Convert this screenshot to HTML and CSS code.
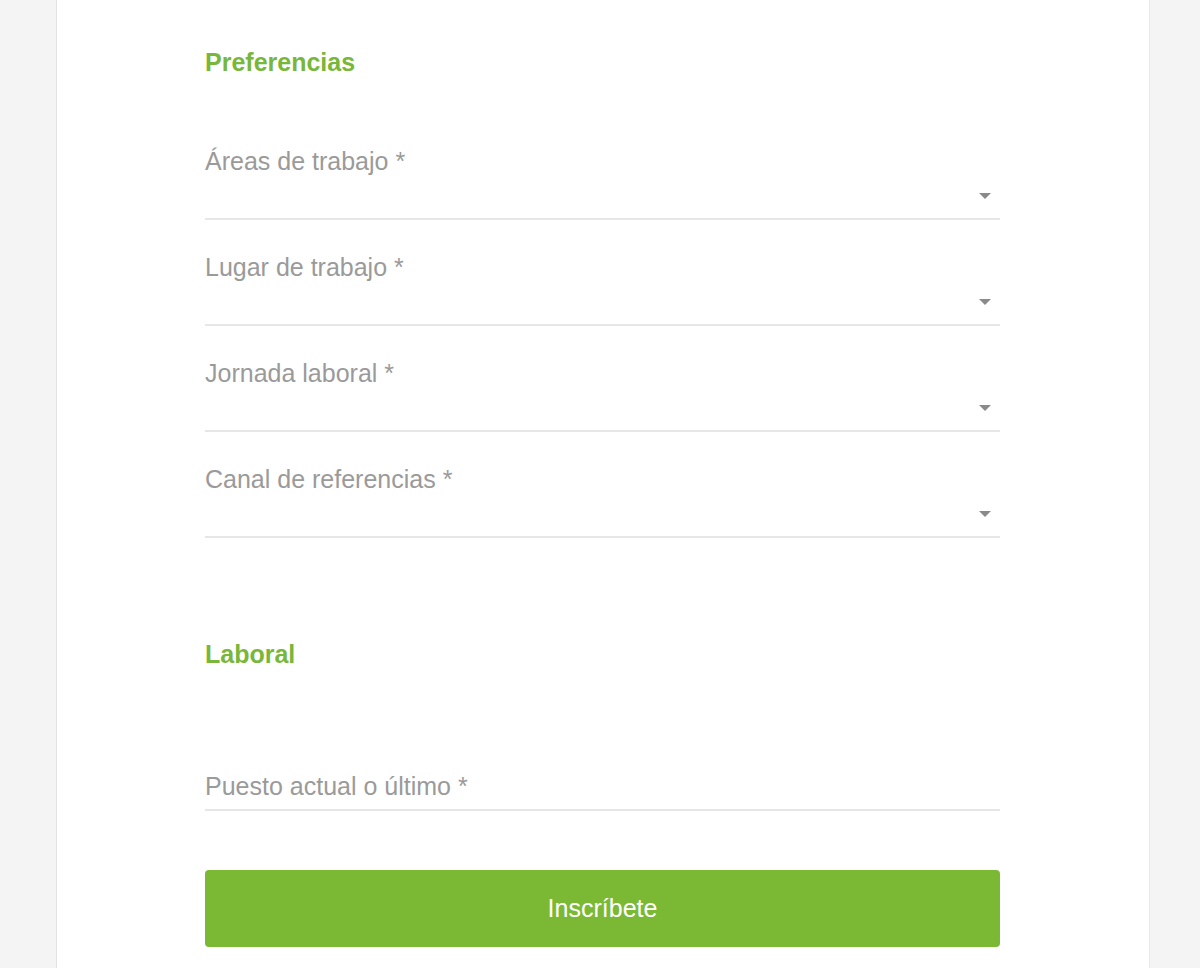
FILE: index.html
```html
<!DOCTYPE html>
<html lang="es">
<head>
<meta charset="utf-8">
<title>Inscríbete</title>
<link rel="stylesheet" href="styles.css">
</head>
<body>
<main class="card">
  <form class="form">
    <h2 class="section-title">Preferencias</h2>
    <div class="field select-field">
      <span class="label">Áreas de trabajo *</span>
      <div class="select-row"><span class="caret"></span></div>
    </div>
    <div class="field select-field">
      <span class="label">Lugar de trabajo *</span>
      <div class="select-row"><span class="caret"></span></div>
    </div>
    <div class="field select-field">
      <span class="label">Jornada laboral *</span>
      <div class="select-row"><span class="caret"></span></div>
    </div>
    <div class="field select-field">
      <span class="label">Canal de referencias *</span>
      <div class="select-row"><span class="caret"></span></div>
    </div>

    <h2 class="section-title section-second">Laboral</h2>
    <div class="field text-field">
      <span class="label">Puesto actual o último *</span>
    </div>

    <button type="button" class="submit">Inscríbete</button>
  </form>
</main>
</body>
</html>
```

FILE: styles.css
```css
html, body {
  margin: 0;
  padding: 0;
}
body {
  background: #f4f4f4;
  font-family: "Liberation Sans", Arial, sans-serif;
  height: 968px;
  overflow: hidden;
}
.card {
  margin-left: 56px;
  width: 1094px;
  min-height: 968px;
  background: #ffffff;
  border-left: 1px solid #e2e2e2;
  border-right: 1px solid #e9e9e9;
  box-sizing: border-box;
  padding: 47px 0 0 148px;
}
.form {
  width: 795px;
  display: flex;
  flex-direction: column;
}
.section-title {
  margin: 0;
  font-size: 25px;
  line-height: 30px;
  font-weight: bold;
  color: #78b73a;
}
.section-second {
  margin-top: 101px;
}
.field {
  display: flex;
  flex-direction: column;
  border-bottom: 2px solid #e6e6e6;
}
.select-field {
  margin-top: 32px;
}
.select-field:first-of-type {
  margin-top: 69px;
}
.label {
  font-size: 25px;
  line-height: 30px;
  color: #9a9a9a;
}
.select-row {
  height: 42px;
  display: flex;
  align-items: center;
  justify-content: flex-end;
  padding-right: 9px;
}
.caret {
  width: 0;
  height: 0;
  border-left: 6px solid transparent;
  border-right: 6px solid transparent;
  border-top: 6px solid #8a8a8a;
  margin-bottom: 3px;
}
.text-field {
  margin-top: 102px;
  padding-bottom: 8px;
}
.submit {
  margin-top: 59px;
  height: 77px;
  width: 795px;
  border: none;
  border-radius: 4px;
  background: #7bb934;
  color: #ffffff;
  font-family: "Liberation Sans", Arial, sans-serif;
  font-size: 25px;
  padding: 0;
}
```
